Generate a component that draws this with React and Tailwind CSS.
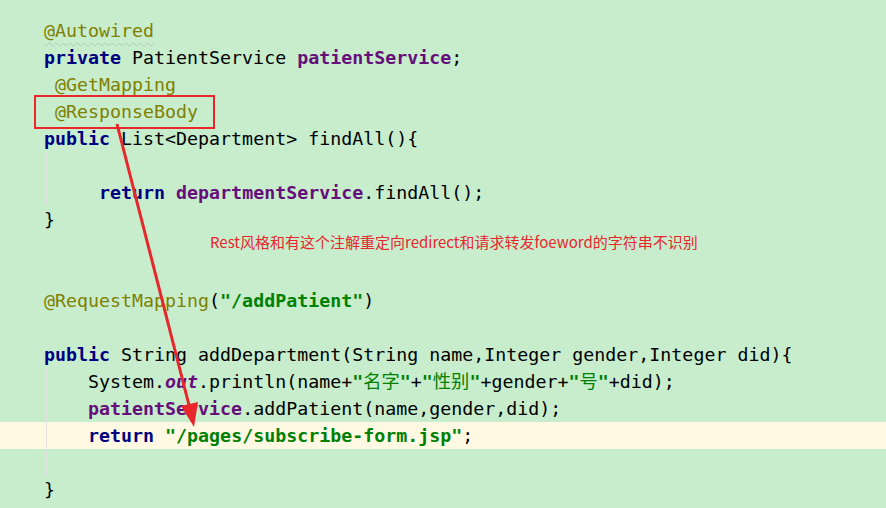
import React from "react";

// IntelliJ-ish token colours
const ann = "text-[#808000]";
const kw = "text-[#000080] font-bold";
const fld = "text-[#660E7A] font-bold";
const str = "text-[#008000] font-bold";

const T = ({ c, children }) => <span className={c}>{children}</span>;

const lines = [
  [<T key="a" c={ann + " underline decoration-wavy decoration-[#b8c4b8] decoration-1 underline-offset-[5px]"}>@Autowired</T>],
  [<T key="a" c={kw}>private</T>, " PatientService ", <T key="b" c={fld}>patientService</T>, ";"],
  [" ", <T key="a" c={ann}>@GetMapping</T>],
  [" ", <T key="a" c={ann}>@ResponseBody</T>],
  [<T key="a" c={kw}>public</T>, " List<Department> findAll(){"],
  [""],
  ["     ", <T key="a" c={kw}>return</T>, " ", <T key="b" c={fld}>departmentService</T>, ".findAll();"],
  ["}"],
  [""],
  [""],
  [<T key="a" c={ann}>@RequestMapping</T>, "(", <T key="b" c={str}>"/addPatient"</T>, ")"],
  [""],
  [<T key="a" c={kw}>public</T>, " String addDepartment(String name,Integer gender,Integer did){"],
  [
    "    System.",
    <T key="a" c={fld + " italic"}>out</T>,
    ".println(name+",
    <T key="b" c={str}>"</T>,
    <T key="c" c="text-[#008000]">名字</T>,
    <T key="d" c={str}>"</T>,
    "+",
    <T key="e" c={str}>"</T>,
    <T key="f" c="text-[#008000]">性别</T>,
    <T key="g" c={str}>"</T>,
    "+gender+",
    <T key="h" c={str}>"</T>,
    <T key="i" c="text-[#008000]">号</T>,
    <T key="j" c={str}>"</T>,
    "+did);",
  ],
  ["    ", <T key="a" c={fld}>patientService</T>, ".addPatient(name,gender,did);"],
  ["    ", <T key="a" c={kw}>return</T>, " ", <T key="b" c={str}>"/pages/subscribe-form.jsp"</T>, ";"],
  [""],
  ["}"],
];

const Arrow = () => (
  <svg className="absolute inset-0 pointer-events-none" width="886" height="508">
    <line x1="117" y1="124" x2="189" y2="405" stroke="#E8262C" strokeWidth="3" />
    <polygon points="194,427 198,402 181,406" fill="#E8262C" />
  </svg>
);

export default function App() {
  return (
    <div className="relative w-full h-[508px] overflow-hidden bg-[#C7EDCC]">
      <div className="pt-[17px] font-['DejaVu_Sans_Mono','Noto_Sans_CJK_SC',monospace] text-[18.3px] text-black">
        {lines.map((parts, i) => (
          <div
            key={i}
            className={
              "h-[27px] leading-[27px] whitespace-pre pl-[44px] " +
              (i === 15 ? "bg-[#FFF9E3]" : "")
            }
          >
            {parts}
          </div>
        ))}
      </div>

      {/* indent guides */}
      <div className="absolute left-[46px] top-[152px] w-px h-[53px] bg-[#E3E3E3]" />
      <div className="absolute left-[46px] top-[368px] w-px h-[107px] bg-[#E3E3E3]" />

      {/* markup drawn over the screenshot */}
      <div className="absolute left-[34px] top-[95px] w-[181px] h-[34px] border-2 border-[#E8262C]" />
      <div className="absolute left-[210px] top-[231px] text-[15px] leading-[22px] text-[#E8262C] font-['Noto_Sans_CJK_SC',sans-serif] whitespace-nowrap">
        Rest风格和有这个注解重定向redirect和请求转发foeword的字符串不识别
      </div>
      <Arrow />
    </div>
  );
}
